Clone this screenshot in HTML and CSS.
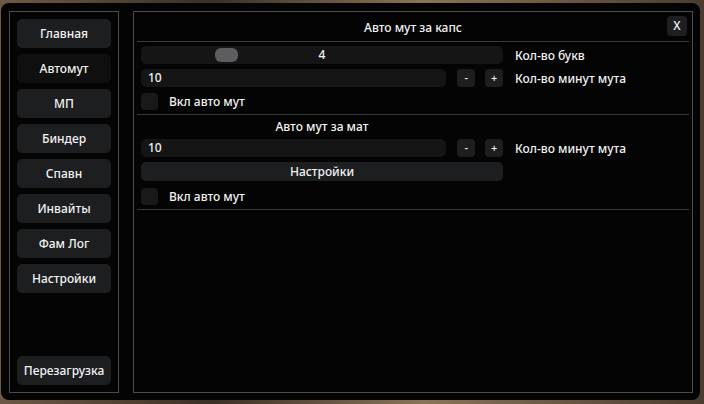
FILE: index.html
```html
<!DOCTYPE html>
<html lang="ru">
<head>
<meta charset="utf-8">
<title>Автомут</title>
<link rel="stylesheet" href="styles.css">
</head>
<body>
<div class="window">
  <nav class="sidebar">
    <button class="nav-btn">Главная</button>
    <button class="nav-btn active">Автомут</button>
    <button class="nav-btn">МП</button>
    <button class="nav-btn">Биндер</button>
    <button class="nav-btn">Спавн</button>
    <button class="nav-btn">Инвайты</button>
    <button class="nav-btn">Фам Лог</button>
    <button class="nav-btn">Настройки</button>
    <div class="spacer"></div>
    <button class="nav-btn">Перезагрузка</button>
  </nav>
  <main class="main">
    <div class="header">
      <span></span>
      <span class="title">Авто мут за капс</span>
      <button class="close">X</button>
    </div>
    <section class="section">
      <div class="row">
        <div class="controls">
          <div class="slider"><span class="thumb"></span><span class="slider-val">4</span></div>
        </div>
        <span class="label">Кол-во букв</span>
      </div>
      <div class="row">
        <div class="controls">
          <div class="input">10</div>
          <button class="step minus">-</button>
          <button class="step plus">+</button>
        </div>
        <span class="label">Кол-во минут мута</span>
      </div>
      <div class="row check-row">
        <span class="checkbox"></span>
        <span class="label">Вкл авто мут</span>
      </div>
    </section>
    <section class="section">
      <div class="row sub-row">
        <div class="controls sub-title">Авто мут за мат</div>
      </div>
      <div class="row">
        <div class="controls">
          <div class="input">10</div>
          <button class="step minus">-</button>
          <button class="step plus">+</button>
        </div>
        <span class="label">Кол-во минут мута</span>
      </div>
      <div class="row">
        <div class="controls">
          <button class="wide-btn">Настройки</button>
        </div>
      </div>
      <div class="row check-row last-check">
        <span class="checkbox"></span>
        <span class="label">Вкл авто мут</span>
      </div>
    </section>
  </main>
</div>
</body>
</html>
```

FILE: styles.css
```css
* { box-sizing: border-box; }
html, body { margin: 0; padding: 0; }
body {
  width: 704px;
  height: 404px;
  background: linear-gradient(90deg, #6e5a44 0%, #3b3026 30%, #8a7458 60%, #4a3c2f 100%);
  font-family: "Noto Sans", "Open Sans", sans-serif;
  font-weight: 500;
  font-size: 12px;
  color: #f2f2f2;
  padding: 3px 4px 4px 1px;
}
.window {
  width: 699px;
  height: 397px;
  background: #040404;
  border-radius: 8px;
  padding: 8px 7px 7px 8px;
  display: flex;
  gap: 14px;
}
button {
  font: inherit;
  color: inherit;
  border: 0;
  padding: 0;
  margin: 0;
}
.sidebar {
  width: 110px;
  border: 1px solid #4c4c4c;
  padding: 7px;
  display: flex;
  flex-direction: column;
  gap: 6px;
}
.spacer { flex: 1; }
.nav-btn {
  height: 29px;
  width: 94px;
  background: #1d1e20;
  border-radius: 5px;
  text-align: center;
  line-height: 29px;
}
.nav-btn.active { background: #0f0f10; }
.main {
  flex: 1;
  border: 1px solid #4c4c4c;
  padding: 0 3px;
  display: flex;
  flex-direction: column;
}
.header {
  height: 30px;
  border-bottom: 1px solid #3a3a3a;
  display: grid;
  grid-template-columns: 1fr auto 1fr;
  align-items: center;
  padding-top: 2px;
}
.title { text-align: center; }
.close {
  justify-self: end;
  width: 20px;
  height: 20px;
  margin-right: 2px;
  margin-top: -3px;
  background: #1f1f21;
  border-radius: 4px;
  font-size: 12px;
  line-height: 20px;
  text-align: center;
}
.section {
  border-bottom: 1px solid #3a3a3a;
  padding: 4px;
  display: flex;
  flex-direction: column;
  gap: 5px;
}
.row {
  display: flex;
  align-items: center;
  gap: 12px;
  min-height: 18px;
}
.controls {
  width: 362px;
  display: flex;
  align-items: center;
  gap: 10px;
}
.slider {
  position: relative;
  width: 362px;
  height: 18px;
  background: #151516;
  border-radius: 5px;
  text-align: center;
  line-height: 18px;
}
.thumb {
  position: absolute;
  left: 74px;
  top: 2px;
  width: 23px;
  height: 14px;
  border-radius: 6px;
  background: #5d5d5f;
}
.slider-val { position: relative; }
.input {
  width: 307px;
  height: 18px;
  background: #151516;
  border-radius: 5px;
  line-height: 18px;
  padding-left: 7px;
}
.step {
  width: 18px;
  height: 18px;
  background: #1e1e20;
  border-radius: 4px;
  line-height: 18px;
  text-align: center;
  font-size: 11px;
}
.minus { margin-left: 1px; }
.check-row { gap: 11px; }
.last-check { margin-top: 1px; }
.checkbox {
  width: 17px;
  height: 17px;
  background: #19191a;
  border-radius: 4px;
}
.sub-row { min-height: 15px; }
.sub-title {
  justify-content: center;
  height: 15px;
  line-height: 15px;
}
.wide-btn {
  width: 362px;
  height: 19px;
  background: #1d1e20;
  border-radius: 5px;
  line-height: 19px;
  text-align: center;
}
.label { white-space: nowrap; }
```
